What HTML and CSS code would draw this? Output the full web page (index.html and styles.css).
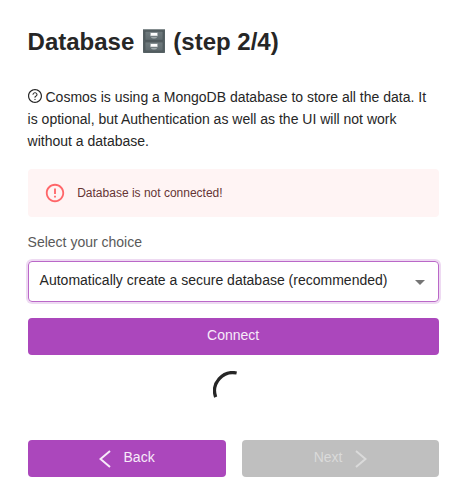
FILE: index.html
```html
<!DOCTYPE html>
<html lang="en">
<head>
    <meta charset="UTF-8">
    <meta name="viewport" content="width=device-width, initial-scale=1.0">
    <title>Database setup</title>
    <link rel="stylesheet" href="styles.css">
</head>
<body>
    <div class="wizard">
        <h1>
            <span class="title-name">Database</span>
            <svg class="cabinet" viewBox="0 0 22 24" aria-label="File cabinet">
                <defs>
                    <linearGradient id="metal" x1="0" y1="0" x2="0" y2="1">
                        <stop offset="0" stop-color="#707b7e"/>
                        <stop offset="1" stop-color="#606b6f"/>
                    </linearGradient>
                </defs>
                <rect width="22" height="24" rx="0.7" fill="#566164"/>
                <rect width="22" height="1" fill="#858e90"/>
                <rect x="2" y="2.2" width="18" height="9" fill="url(#metal)" stroke="#465154" stroke-width="0.6"/>
                <rect x="2" y="13" width="18" height="9" fill="url(#metal)" stroke="#465154" stroke-width="0.6"/>
                <rect x="7" y="3.6" width="8" height="3.6" fill="#a9b0b2"/>
                <rect x="8" y="4" width="6" height="2.6" fill="#fff"/>
                <path d="M8 8h6q0 1.400-2 1.400h-2q-2 0-2-1.400z" fill="#a0a9ab"/>
                <rect x="7" y="14.600" width="8" height="3.6" fill="#a9b0b2"/>
                <rect x="8" y="15" width="6" height="2.6" fill="#fff"/>
                <path d="M8 19h6q0 1.400-2 1.400h-2q-2 0-2-1.400z" fill="#a0a9ab"/>
            </svg>
            <span class="title-step">(step 2/4)</span>
        </h1>

        <p class="intro">
            <svg class="help" viewBox="64 64 896 896" aria-hidden="true">
                <path d="M512 64C264.600 64 64 264.600 64 512s200.600 448 448 448 448-200.600 448-448S759.400 64 512 64zm0 820c-205.400 0-372-166.600-372-372s166.600-372 372-372 372 166.600 372 372-166.600 372-372 372z"/>
                <path d="M623.600 316.700C593.600 290.400 554 276 512 276s-81.600 14.500-111.600 40.700C369.200 344 352 380.700 352 420v7.600c0 4.400 3.600 8 8 8h48c4.400 0 8-3.600 8-8V420c0-44.100 43.100-80 96-80s96 35.900 96 80c0 31.100-22 59.600-56.100 72.700-21.200 8.100-39.200 22.300-52.100 40.900-13.100 19-19.900 41.800-19.900 64.900V620c0 4.400 3.600 8 8 8h48c4.400 0 8-3.600 8-8v-22.700a48.300 48.300 0 0 1 30.900-44.800c59-22.700 97.100-74.700 97.100-132.500.1-39.300-17.100-76-48.300-103.300zM472 732a40 40 0 1 0 80 0 40 40 0 1 0-80 0z"/>
            </svg>
            Cosmos is using a MongoDB database to store all the data. It<br>is optional, but Authentication as well as the UI will not work<br>without a database.
        </p>

        <div class="alert">
            <svg class="alert-icon" viewBox="0 0 24 24" aria-hidden="true">
                <path d="M11 15h2v2h-2zm0-8h2v6h-2zm.990-5C6.470 2 2 6.480 2 12s4.470 10 9.990 10C17.520 22 22 17.520 22 12S17.520 2 11.990 2zM12 20c-4.420 0-8-3.580-8-8s3.580-8 8-8 8 3.580 8 8-3.580 8-8 8z"/>
            </svg>
            <span>Database is not connected!</span>
        </div>

        <div class="label">Select your choice</div>
        <div class="select">
            <span>Automatically create a secure database (recommended)</span>
            <svg class="arrow" viewBox="0 0 24 24" aria-hidden="true"><path d="m7 10 5 5 5-5z"/></svg>
        </div>

        <button class="btn connect">Connect</button>

        <svg class="spinner" viewBox="22 22 44 44" aria-label="Loading">
            <path d="M24.900 50.700A20.200 20.200 0 0 1 48 24.200"/>
        </svg>

        <div class="actions">
            <button class="btn back">
                <svg class="chevron" viewBox="0 0 12 18" aria-hidden="true"><path d="M11 1 1.500 9l9.500 8"/></svg>
                <span>Back</span>
            </button>
            <button class="btn next" disabled>
                <span>Next</span>
                <svg class="chevron" viewBox="0 0 12 18" aria-hidden="true"><path d="m1 1 9.500 8L1 17"/></svg>
            </button>
        </div>
    </div>
</body>
</html>
```

FILE: styles.css
```css
* {
    box-sizing: border-box;
}
body {
    margin: 0;
    background: #fff;
    color: #262626;
    font-family: "Liberation Sans", Arial, sans-serif;
    font-size: 14px;
    line-height: 22px;
}
.wizard {
    display: flex;
    flex-direction: column;
    width: 466.6px;
    padding: 26px 28px 26px 27.6px;
}
h1 {
    display: flex;
    align-items: center;
    margin: 0;
    height: 32px;
    font-size: 24px;
    line-height: 32px;
    white-space: nowrap;
}
.cabinet {
    width: 22px;
    height: 24px;
    margin: 0 8.6px 2px 8.4px;
}
.intro {
    margin: 28px 0 0;
    white-space: nowrap;
}
.help {
    width: 14px;
    height: 14px;
    vertical-align: -1px;
    fill: #262626;
}
.alert {
    display: flex;
    align-items: center;
    height: 48px;
    margin-top: 17px;
    padding-left: 16px;
    border-radius: 4px;
    background: #fff4f4;
    color: #663535;
    font-size: 12px;
}
.alert-icon {
    width: 22px;
    height: 22px;
    margin-right: 11.6px;
    fill: #ff6669;
}
.label {
    margin-top: 14px;
    color: #595959;
}
.select {
    display: flex;
    align-items: center;
    justify-content: space-between;
    height: 41px;
    margin-top: 8px;
    padding: 0 6px 3px 11px;
    border: 1px solid #ba68c8;
    border-radius: 4px;
    box-shadow: 0 0 0 2px rgba(171, 71, 188, 0.2);
    white-space: nowrap;
}
.arrow {
    width: 24px;
    height: 24px;
    margin-top: 3px;
    fill: #757575;
}
.btn {
    display: flex;
    align-items: center;
    justify-content: center;
    height: 37px;
    padding: 0 0 4px;
    border: none;
    border-radius: 4px;
    background: #ab47bc;
    color: #f7ebf9;
    font: inherit;
    cursor: pointer;
}
.connect {
    margin-top: 16px;
}
.spinner {
    align-self: center;
    width: 40px;
    height: 40px;
    margin-top: 16px;
    fill: none;
    stroke: #262626;
    stroke-width: 3.6;
}
.actions {
    display: grid;
    grid-template-columns: 198px 1fr;
    gap: 16px;
    margin-top: 29px;
}
.chevron {
    width: 12px;
    height: 18px;
    margin-top: 5px;
    fill: none;
    stroke: currentColor;
    stroke-width: 2;
}
.back {
    gap: 13px;
}
.next {
    gap: 13px;
    padding-left: 1px;
    background: #bfbfbf;
    color: #dadada;
    cursor: default;
}
```
